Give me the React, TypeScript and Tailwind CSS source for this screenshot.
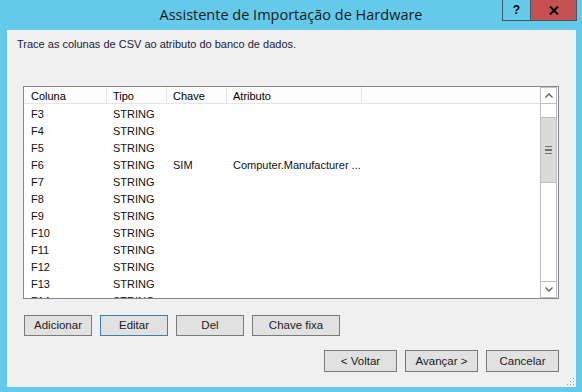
import React from "react";

const rows: [string, string, string, string][] = [
  ["F3", "STRING", "", ""],
  ["F4", "STRING", "", ""],
  ["F5", "STRING", "", ""],
  ["F6", "STRING", "SIM", "Computer.Manufacturer ..."],
  ["F7", "STRING", "", ""],
  ["F8", "STRING", "", ""],
  ["F9", "STRING", "", ""],
  ["F10", "STRING", "", ""],
  ["F11", "STRING", "", ""],
  ["F12", "STRING", "", ""],
  ["F13", "STRING", "", ""],
  ["F14", "STRING", "", ""],
];

function Btn({ label, w, h = "h-[21px]", focus = false }: { label: string; w: string; h?: string; focus?: boolean }) {
  return (
    <button
      className={`${w} ${h} flex items-center justify-center bg-[#E1E1E1] border text-[11.5px] text-[#1b1b1b] pt-[1px] ${
        focus ? "border-[#3C7FB1]" : "border-[#7A7A7A]"
      }`}
    >
      {label}
    </button>
  );
}

export default function App() {
  return (
    <div className="w-[582px] h-[392px] bg-[#65CAEA] flex flex-col font-['Liberation_Sans',sans-serif] text-black select-none">
      {/* Title bar */}
      <div className="h-[30px] grid grid-cols-[1fr_auto_1fr] shrink-0">
        <div />
        <div className="pt-[4px] text-[14.5px] text-[#1a1a1a] font-['Open_Sans',sans-serif]">
          Assistente de Importação de Hardware
        </div>
        <div className="flex justify-end items-start pr-[5px]">
          <div className="w-[29px] h-[21px] border border-[#3a5a66] border-t-0 flex items-center justify-center text-[12px] font-bold">
            ?
          </div>
          <div className="w-[46px] h-[21px] bg-[#C75050] border border-[#3a5a66] border-t-0 border-l-0 flex items-center justify-center">
            <svg width="10" height="9" viewBox="0 0 10 9">
              <path d="M1 0.5 L9 8.5 M9 0.5 L1 8.5" stroke="#000" strokeWidth="2" />
            </svg>
          </div>
        </div>
      </div>

      {/* Client area */}
      <div className="flex-1 ml-[7px] mr-[6px] mb-[5px] bg-[#F0F0F0] flex flex-col relative">
        <div className="pl-[10px] pt-[7px] text-[11px] leading-[15px] text-[#1b1b3a]">
          Trace as colunas de CSV ao atributo do banco de dados.
        </div>

        {/* List view */}
        <div className="ml-[16px] mt-[34px] w-[536px] h-[213px] border border-[#828790] bg-white flex text-[11px]">
          <div className="flex-1 flex flex-col overflow-hidden">
            <div className="h-[17px] flex border-b border-[#E5E5E5] bg-[#FDFDFD] shrink-0">
              <div className="w-[83px] pl-[7px] pt-[2px] border-r border-[#E5E5E5] leading-[14px]">Coluna</div>
              <div className="w-[60px] pl-[6px] pt-[2px] border-r border-[#E5E5E5] leading-[14px]">Tipo</div>
              <div className="w-[60px] pl-[6px] pt-[2px] border-r border-[#E5E5E5] leading-[14px]">Chave</div>
              <div className="w-[135px] pl-[6px] pt-[2px] border-r border-[#E5E5E5] leading-[14px]">Atributo</div>
            </div>
            {rows.map((r) => (
              <div key={r[0]} className="h-[17px] flex shrink-0 pt-[3px] leading-[14px] text-[#111]">
                <div className="w-[83px] pl-[7px]">{r[0]}</div>
                <div className="w-[60px] pl-[6px]">{r[1]}</div>
                <div className="w-[60px] pl-[6px]">{r[2]}</div>
                <div className="w-[160px] pl-[6px] whitespace-nowrap">{r[3]}</div>
              </div>
            ))}
          </div>
          {/* Scrollbar */}
          <div className="w-[17px] mr-[1px] flex flex-col border-x border-[#BFBFBF] shrink-0">
            <div className="h-[17px] border-y border-[#BFBFBF] flex items-center justify-center">
              <svg width="8" height="5" viewBox="0 0 8 5">
                <path d="M0.5 4.5 L4 1 L7.5 4.5" stroke="#606060" strokeWidth="1.3" fill="none" />
              </svg>
            </div>
            <div className="h-[13px]" />
            <div className="h-[66px] bg-[#DADADA] border-y border-[#BFBFBF] flex flex-col items-center justify-center gap-[2px]">
              <div className="w-[7px] h-[1.5px] bg-[#707070]" />
              <div className="w-[7px] h-[1.5px] bg-[#707070]" />
              <div className="w-[7px] h-[1.5px] bg-[#707070]" />
            </div>
            <div className="flex-1" />
            <div className="h-[17px] border-y border-[#BFBFBF] flex items-center justify-center">
              <svg width="8" height="5" viewBox="0 0 8 5">
                <path d="M0.5 0.5 L4 4 L7.5 0.5" stroke="#606060" strokeWidth="1.3" fill="none" />
              </svg>
            </div>
          </div>
        </div>

        {/* Action buttons */}
        <div className="ml-[17px] mt-[16px] flex gap-[8px]">
          <Btn label="Adicionar" w="w-[68px]" />
          <Btn label="Editar" w="w-[68px]" focus />
          <Btn label="Del" w="w-[68px]" />
          <Btn label="Chave fixa" w="w-[88px]" />
        </div>

        {/* Wizard buttons */}
        <div className="mt-[14px] mr-[17px] flex justify-end gap-[8px]">
          <Btn label="< Voltar" w="w-[73px]" h="h-[22px]" />
          <Btn label="Avançar >" w="w-[73px]" h="h-[22px]" />
          <Btn label="Cancelar" w="w-[73px]" h="h-[22px]" />
        </div>

        {/* Size grip */}
        <svg className="absolute right-[1px] bottom-[1px]" width="10" height="10" viewBox="0 0 10 10">
          {[
            [8, 2], [8, 5], [5, 5], [8, 8], [5, 8], [2, 8],
          ].map(([x, y], i) => (
            <rect key={i} x={x} y={y} width="1" height="1" fill="#A0A0A0" />
          ))}
        </svg>
      </div>
    </div>
  );
}
